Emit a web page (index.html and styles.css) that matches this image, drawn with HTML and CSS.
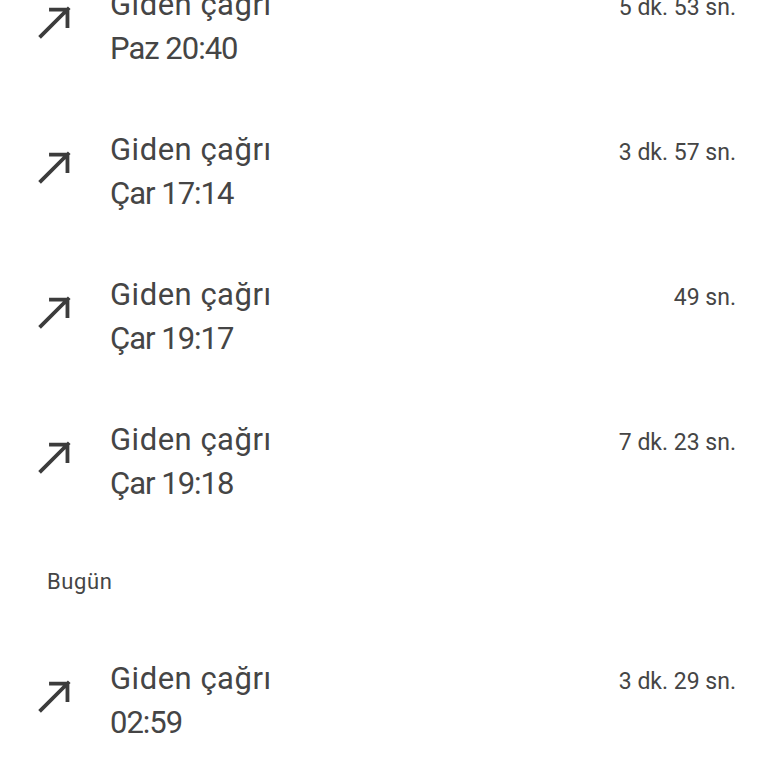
FILE: index.html
```html
<!DOCTYPE html>
<html lang="tr">
<head>
    <meta charset="UTF-8">
    <meta name="viewport" content="width=device-width, initial-scale=1.0">
    <title>Arama geçmişi</title>
    <link rel="stylesheet" href="styles.css">
</head>
<body>
    <div class="Gecmis">
        <div class="Kayit">
            <svg class="ok" viewBox="0 0 32 32"><path d="M3 29 L28 4 M11 5.5 H26.5 V21"/></svg>
            <div class="Bilgi">
                <div class="Ust">
                    <span class="baslik">Giden çağrı</span>
                    <span class="sure">5 dk. 53 sn.</span>
                </div>
                <div class="zaman">Paz 20:40</div>
            </div>
        </div>
        <div class="Kayit">
            <svg class="ok" viewBox="0 0 32 32"><path d="M3 29 L28 4 M11 5.5 H26.5 V21"/></svg>
            <div class="Bilgi">
                <div class="Ust">
                    <span class="baslik">Giden çağrı</span>
                    <span class="sure">3 dk. 57 sn.</span>
                </div>
                <div class="zaman">Çar 17:14</div>
            </div>
        </div>
        <div class="Kayit">
            <svg class="ok" viewBox="0 0 32 32"><path d="M3 29 L28 4 M11 5.5 H26.5 V21"/></svg>
            <div class="Bilgi">
                <div class="Ust">
                    <span class="baslik">Giden çağrı</span>
                    <span class="sure">49 sn.</span>
                </div>
                <div class="zaman">Çar 19:17</div>
            </div>
        </div>
        <div class="Kayit">
            <svg class="ok" viewBox="0 0 32 32"><path d="M3 29 L28 4 M11 5.5 H26.5 V21"/></svg>
            <div class="Bilgi">
                <div class="Ust">
                    <span class="baslik">Giden çağrı</span>
                    <span class="sure">7 dk. 23 sn.</span>
                </div>
                <div class="zaman">Çar 19:18</div>
            </div>
        </div>
        <div class="Gun">Bugün</div>
        <div class="Kayit">
            <svg class="ok" viewBox="0 0 32 32"><path d="M3 29 L28 4 M11 5.5 H26.5 V21"/></svg>
            <div class="Bilgi">
                <div class="Ust">
                    <span class="baslik">Giden çağrı</span>
                    <span class="sure">3 dk. 29 sn.</span>
                </div>
                <div class="zaman">02:59</div>
            </div>
        </div>
    </div>
</body>
</html>
```
FILE: styles.css
```css
body
{
    margin: 0;
    background: #fff;
    font-family: Roboto, "Noto Sans", sans-serif;
    color: #454545;
    overflow: hidden;
}
.Gecmis
{
    margin-top: -46px;
}
.Kayit
{
    display: flex;
    align-items: center;
    height: 145px;
    padding: 0 32px 0 36px;
}
.ok
{
    width: 38px;
    height: 38px;
    flex: none;
    margin-right: 36px;
    margin-top: -10px;
    fill: none;
    stroke: #3c3c3c;
    stroke-width: 3.2;
}
.Bilgi
{
    flex: 1;
}
.Ust
{
    display: flex;
    justify-content: space-between;
    align-items: baseline;
}
.baslik, .zaman
{
    font-size: 31px;
    line-height: 44px;
}
.baslik
{
    letter-spacing: .5px;
}
.zaman
{
    letter-spacing: -1px;
}
.sure
{
    font-size: 23px;
}
.Gun
{
    height: 94px;
    display: flex;
    align-items: center;
    padding-left: 47px;
    font-size: 22px;
    letter-spacing: .6px;
}
```
